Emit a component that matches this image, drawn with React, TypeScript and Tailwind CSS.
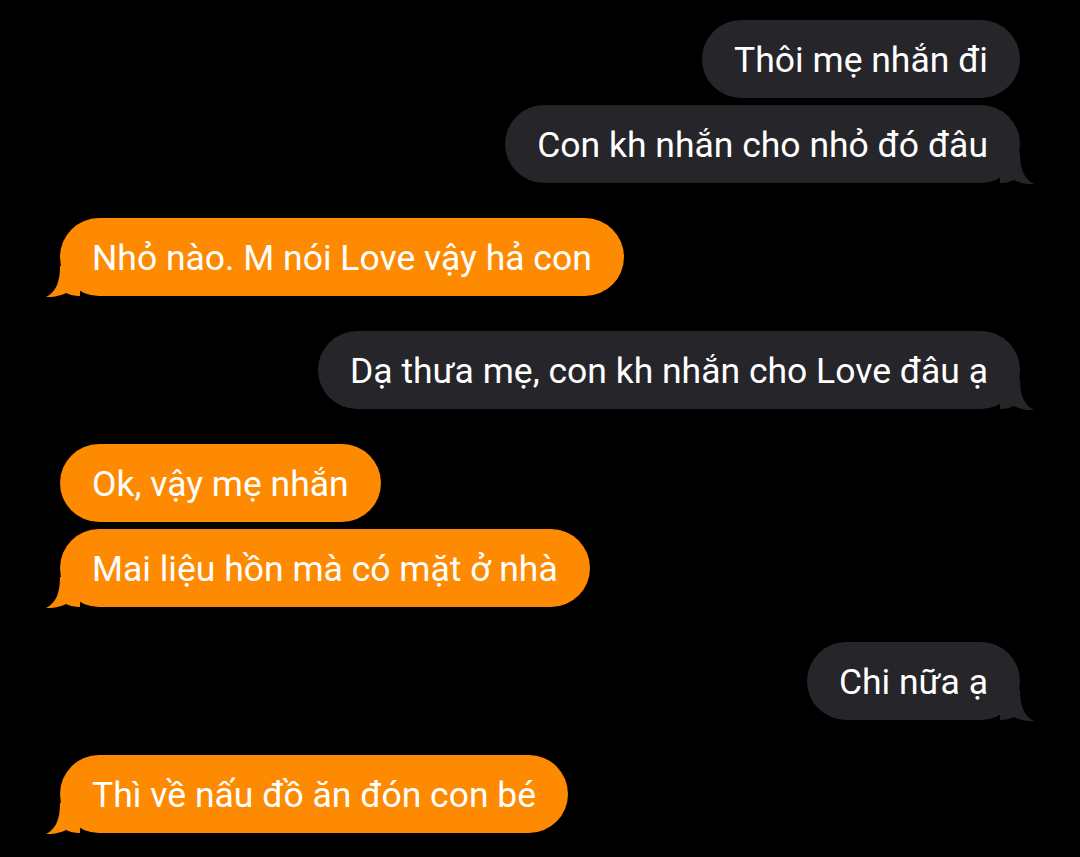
import React from 'react';

type Msg = { text: string; me: boolean; tail: boolean; gap: 'sm' | 'lg' | 'none' };

const messages: Msg[] = [
  { text: 'Thôi mẹ nhắn đi', me: true, tail: false, gap: 'none' },
  { text: 'Con kh nhắn cho nhỏ đó đâu', me: true, tail: true, gap: 'sm' },
  { text: 'Nhỏ nào. M nói Love vậy hả con', me: false, tail: true, gap: 'lg' },
  { text: 'Dạ thưa mẹ, con kh nhắn cho Love đâu ạ', me: true, tail: true, gap: 'lg' },
  { text: 'Ok, vậy mẹ nhắn', me: false, tail: false, gap: 'lg' },
  { text: 'Mai liệu hồn mà có mặt ở nhà', me: false, tail: true, gap: 'sm' },
  { text: 'Chi nữa ạ', me: true, tail: true, gap: 'lg' },
  { text: 'Thì về nấu đồ ăn đón con bé', me: false, tail: true, gap: 'lg' },
];

function Tail({ me }: { me: boolean }) {
  return (
    <svg
      width="34"
      height="31"
      viewBox="0 0 34 31"
      className={
        me
          ? 'absolute -right-[14px] -bottom-px fill-[#262529]'
          : 'absolute -left-[14px] -bottom-px fill-[#fe8a02] -scale-x-100'
      }
    >
      <path d="M20 0 C20 16 24 26 34 31 C26 31.5 19 29.5 14 27 C10 29 6 30 0 30 L0 0 Z" />
    </svg>
  );
}

function Bubble({ msg }: { msg: Msg }) {
  const gap = msg.gap === 'sm' ? 'mt-[7px]' : msg.gap === 'lg' ? 'mt-[35px]' : '';
  return (
    <div className={`flex ${msg.me ? 'justify-end' : 'justify-start'} ${gap}`}>
      <div
        className={`relative rounded-[39px] h-[78px] flex items-center px-[32px] pt-[3px] text-[35.5px] text-white ${
          msg.me ? 'bg-[#262529]' : 'bg-[#fe8a02]'
        }`}
      >
        {msg.tail && <Tail me={msg.me} />}
        <span className="relative">{msg.text}</span>
      </div>
    </div>
  );
}

export default function App() {
  return (
    <div
      className="min-h-screen bg-black pt-[20px] pl-[60px] pr-[60px]"
      style={{ fontFamily: 'Roboto, "Noto Sans", sans-serif' }}
    >
      {messages.map((m, i) => (
        <Bubble key={i} msg={m} />
      ))}
    </div>
  );
}
